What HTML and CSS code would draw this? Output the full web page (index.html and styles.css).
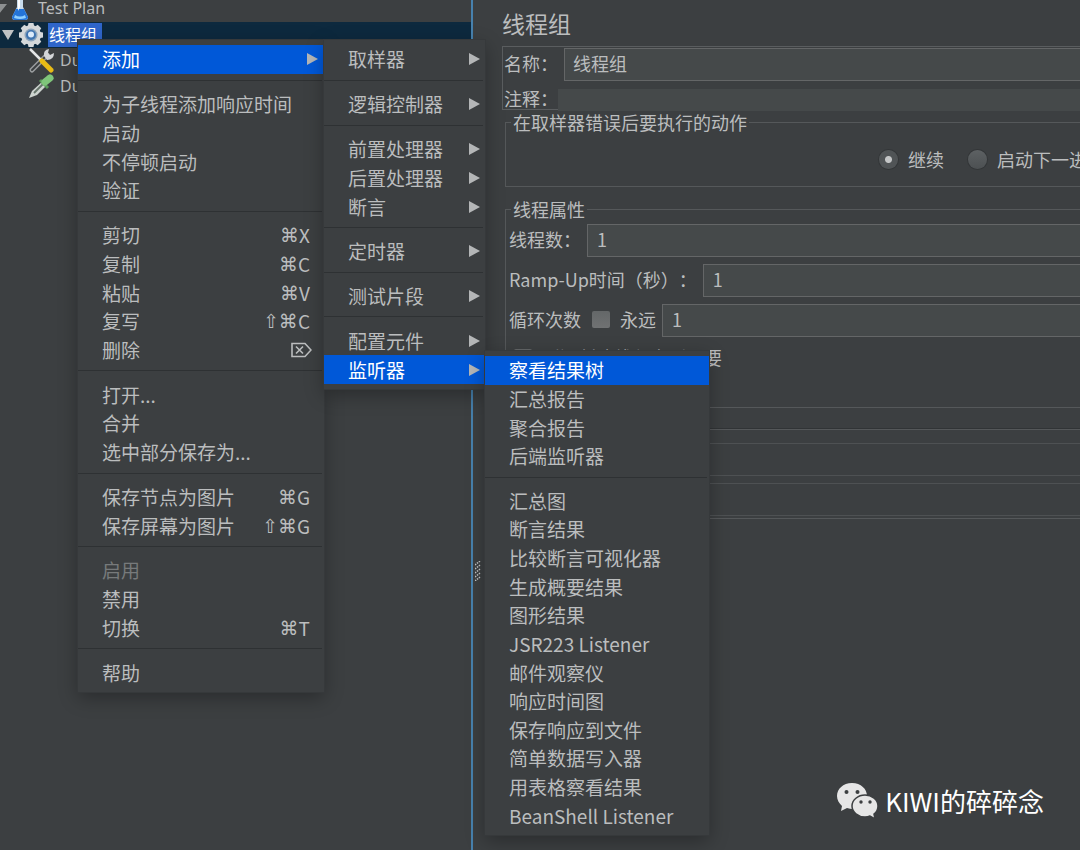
FILE: index.html
```
<!DOCTYPE html>
<html lang="zh-CN">
<head>
<meta charset="utf-8">
<title>线程组</title>
<link rel="stylesheet" href="styles.css">
</head>
<body>
<div class="app">
  <aside class="tree">
    <ul class="tree-list">
      <li class="tree-row">
        <svg class="arrow" viewBox="0 0 14 12"><path d="M-9 1H7L-1 11Z" fill="#8d9092"/></svg>
        <svg class="icon-flask" viewBox="0 0 18 24"><path d="M5 1h8l-1 2v7l5 10q0 3-3 3H4q-3 0-3-3l5-10V3Z" fill="#c9dcec"/><path d="M5 12h8l4 8q0 3-3 3H4q-3 0-3-3Z" fill="#2474d8"/><path d="M4 18q5 3 10 0l1 3q-6 2-12 0Z" fill="#8fd0ff"/><path d="M7 2h2v8l-2 4Z" fill="#fff"/></svg>
        <span class="tree-name">Test Plan</span>
      </li>
      <li class="tree-row selected">
        <svg class="arrow" viewBox="0 0 14 12"><path d="M2 1h12L8 11Z" fill="#c0c2c4"/></svg>
        <svg class="icon-gear" viewBox="0 0 26 26"><g fill="#d5d8da"><circle cx="13" cy="13" r="10"/><path id="t" d="M10.500 1h5l.8 4h-6.600zM10.500 25h5l.8-4h-6.600z"/><use href="#t" transform="rotate(45 13 13)"/><use href="#t" transform="rotate(90 13 13)"/><use href="#t" transform="rotate(135 13 13)"/></g><circle cx="13" cy="13" r="6.500" fill="#8ba3bb"/><circle cx="13" cy="13" r="5" fill="#3f74b0"/><circle cx="13" cy="12.500" r="3" fill="#dbeafa"/></svg>
        <span class="tree-name">线程组</span>
      </li>
      <li class="tree-row child">
        <svg class="icon-tool" viewBox="0 0 26 26"><path d="M4 22 19 7" stroke="#9a9d9f" stroke-width="5" stroke-linecap="round"/><path d="M4 22 17 9" stroke="#3c3f41" stroke-width="2" stroke-linecap="round"/><path d="M16 8q-1-6 5-7l-1 4 2 2 4-2q0 7-7 7Z" fill="#d4d6d8"/><path d="m2 1 13 13" stroke="#e4e6e7" stroke-width="2.500"/><path d="m14 13 9 9" stroke="#e8bb16" stroke-width="5" stroke-linecap="round"/></svg>
        <span class="tree-name">Dummy</span>
      </li>
      <li class="tree-row child">
        <svg class="icon-tool" viewBox="0 0 26 26"><path d="m1 24 3-7L15 7l4 4L9 21Z" fill="#cdd4cf"/><path d="M6 19 15 10" stroke="#66756b" stroke-width="2"/><path d="m12 6 8 8" stroke="#5a9a5a" stroke-width="3"/><path d="m17 8 5-4" stroke="#7fc57a" stroke-width="7" stroke-linecap="round"/></svg>
        <span class="tree-name">Dummy</span>
      </li>
    </ul>
  </aside>
  <div class="splitter">
    <svg class="grip" viewBox="0 0 6 20"><path d="m0 4 5-4M0 8l5-4M0 12l5-4M0 16l5-4M0 20l5-4" stroke="#c5c7c8" stroke-width="1.500" stroke-dasharray="1.500 1"/></svg>
  </div>
  <main class="editor">
    <h1 class="title">线程组</h1>
    <section class="identity">
      <div class="field"><label for="name">名称：</label><input class="box" id="name" type="text" value="线程组"></div>
      <div class="field comment"><label for="note">注释：</label><input class="flat" id="note" type="text"></div>
    </section>
    <fieldset class="group">
      <legend>在取样器错误后要执行的动作</legend>
      <div class="choices">
        <label class="choice"><input type="radio" name="onerror" checked>继续</label>
        <label class="choice"><input type="radio" name="onerror">启动下一进程循环</label>
      </div>
    </fieldset>
    <fieldset class="group threads">
      <legend>线程属性</legend>
      <div class="rows">
        <div class="field"><label for="threads">线程数：</label><input class="box" id="threads" type="text" value="1"></div>
        <div class="field"><label for="ramp">Ramp-Up时间（秒）：</label><input class="box" id="ramp" type="text" value="1"></div>
        <div class="field loops"><label for="loops">循环次数</label><label class="check"><input type="checkbox">永远</label><input class="box" id="loops" type="text" value="1"></div>
        <label class="check delayed"><input type="checkbox">延迟创建线程直到需要</label>
      </div>
    </fieldset>
    <section class="schedule">
      <input class="box" type="text" aria-label="持续时间" disabled>
      <input class="box" type="text" aria-label="启动延迟" disabled>
    </section>
  </main>

  <nav class="menu menu-main">
    <button class="item active">添加<i class="more"></i></button>
    <hr>
    <button class="item">为子线程添加响应时间</button>
    <button class="item">启动</button>
    <button class="item">不停顿启动</button>
    <button class="item">验证</button>
    <hr>
    <button class="item">剪切<kbd><span class="mod">⌘</span>X</kbd></button>
    <button class="item">复制<kbd><span class="mod">⌘</span>C</kbd></button>
    <button class="item">粘贴<kbd><span class="mod">⌘</span>V</kbd></button>
    <button class="item">复写<kbd><span class="mod">⇧⌘</span>C</kbd></button>
    <button class="item">删除<kbd aria-label="Delete"><svg class="key-delete" viewBox="0 0 21 16"><path d="M1 1.500h13l6 6.500-6 6.500H1ZM5 4.500l7 7M12 4.500l-7 7" fill="none" stroke="#bbbdbe" stroke-width="1.600"/></svg></kbd></button>
    <hr>
    <button class="item">打开...</button>
    <button class="item">合并</button>
    <button class="item">选中部分保存为...</button>
    <hr>
    <button class="item">保存节点为图片<kbd><span class="mod">⌘</span>G</kbd></button>
    <button class="item">保存屏幕为图片<kbd><span class="mod">⇧⌘</span>G</kbd></button>
    <hr>
    <button class="item" disabled>启用</button>
    <button class="item">禁用</button>
    <button class="item">切换<kbd><span class="mod">⌘</span>T</kbd></button>
    <hr>
    <button class="item">帮助</button>
  </nav>

  <nav class="menu menu-add">
    <button class="item">取样器<i class="more"></i></button>
    <hr>
    <button class="item">逻辑控制器<i class="more"></i></button>
    <hr>
    <button class="item">前置处理器<i class="more"></i></button>
    <button class="item">后置处理器<i class="more"></i></button>
    <button class="item">断言<i class="more"></i></button>
    <hr>
    <button class="item">定时器<i class="more"></i></button>
    <hr>
    <button class="item">测试片段<i class="more"></i></button>
    <hr>
    <button class="item">配置元件<i class="more"></i></button>
    <button class="item active">监听器<i class="more"></i></button>
  </nav>

  <nav class="menu menu-listener">
    <button class="item active">察看结果树</button>
    <button class="item">汇总报告</button>
    <button class="item">聚合报告</button>
    <button class="item">后端监听器</button>
    <hr>
    <button class="item">汇总图</button>
    <button class="item">断言结果</button>
    <button class="item">比较断言可视化器</button>
    <button class="item">生成概要结果</button>
    <button class="item">图形结果</button>
    <button class="item">JSR223 Listener</button>
    <button class="item">邮件观察仪</button>
    <button class="item">响应时间图</button>
    <button class="item">保存响应到文件</button>
    <button class="item">简单数据写入器</button>
    <button class="item">用表格察看结果</button>
    <button class="item">BeanShell Listener</button>
  </nav>

  <div class="watermark">
    <svg viewBox="0 0 42 36"><path d="M15 0C6 0 0 6 0 13c0 4 2 7 5 10l-1 5 6-3q3 1 6 1C24 26 30 20 30 13S24 0 15 0Z" fill="#e6e6e6"/><circle cx="9.500" cy="9" r="2" fill="#3c3f41"/><circle cx="20.500" cy="9" r="2" fill="#3c3f41"/><path d="M28 12c-7 0-13 5-13 11s6 11 13 11q3 0 5-1l5 3-1-5q4-3 4-8c0-6-6-11-13-11Z" fill="#e6e6e6" stroke="#3c3f41" stroke-width="1.500"/><circle cx="24" cy="19" r="1.700" fill="#3c3f41"/><circle cx="33" cy="19" r="1.700" fill="#3c3f41"/></svg>
    <span>KIWI的碎碎念</span>
  </div>
</div>
</body>
</html>
```
FILE: styles.css
```
* { box-sizing: border-box; }

body {
  margin: 0;
  background: #3c3f41;
  color: #bbbdbe;
  font: 18px/26px "Noto Sans CJK SC", "DejaVu Sans", sans-serif;
  text-spacing-trim: space-all;
}

button, input { font: inherit; color: inherit; }

.app {
  position: relative;
  display: flex;
  height: 100vh;
  overflow: hidden;
  white-space: nowrap;
}

/* Test plan tree */
.tree { flex: 0 0 471px; }
.tree-list {
  list-style: none;
  margin: -4px 0 0;
  padding: 0;
  font-family: "Noto Sans", "Noto Sans CJK SC", sans-serif;
  font-size: 16px;
}
.tree-row { display: flex; align-items: center; height: 26px; }
.tree-row.selected { background: #0d293e; color: #fff; }
.tree-row.child { padding-left: 28px; }
.tree-name { padding-bottom: 2px; }
.arrow { width: 14px; height: 12px; }
.icon-flask { width: 18px; height: 24px; margin-right: 9px; margin-left: -3px; }
.icon-gear { width: 26px; height: 26px; margin: 0 4px; }
.icon-tool { width: 26px; height: 26px; margin-right: 6px; }
.selected .tree-name { background: #2f65ca; padding: 0 5px 0 1px; line-height: 24px; }

.splitter {
  flex: 0 0 14px;
  display: flex;
  align-items: center;
  border-left: 2px solid #4781ad;
}
.grip { width: 6px; height: 20px; margin: 292px 0 0 2px; }

/* Editor */
.editor { flex: 1; min-width: 0; overflow: hidden; padding: 7px 0 0 17px; }
.title { margin: 0 0 7px; font-size: 23px; line-height: 32px; font-weight: 400; }
.identity {
  border: 1px solid #5a5d5f;
  border-right: 0;
  padding: 1px 0 1px 1px;
  height: 64px;
}
.field { display: flex; align-items: center; gap: 6px; }
.field label { padding-bottom: 3px; }
.comment { gap: 0; margin-top: 4px; }
.box, .flat {
  flex: 1;
  min-width: 0;
  height: 33px;
  margin: 0;
  padding: 0 8px 3px;
  border: 1px solid #646667;
  border-right: 0;
  background: #45494a;
}
.flat { border: 0; height: 22px; }
.box:disabled { background: transparent; border-color: #4e5153; }

.group {
  margin: -1px 0 0 3px;
  padding: 0;
  border: 1px solid #55585a;
  border-right: 0;
  min-width: 0;
}
.group legend { margin-left: 5px; padding: 0 2px; line-height: 26px; }
.choices { display: flex; gap: 24px; padding: 11px 0 14px 373px; }
.choice { display: flex; align-items: center; gap: 10px; }
.choice input, .check input { appearance: none; margin: 0; flex: none; }
.choice input {
  width: 19px;
  height: 19px;
  border-radius: 50%;
  background: linear-gradient(#5d6163, #4c5052);
  box-shadow: 0 0 0 1px #333638;
}
.choice input:checked { background: radial-gradient(circle, #c4c6c7 0 3px, #505456 4px); }
.group.threads { margin-top: 9px; }
.rows { display: flex; flex-direction: column; gap: 7px; padding: 2px 0 37px 3px; }
.threads .box { padding: 0 9px 3px; }
.check { display: flex; align-items: center; gap: 10px; }
.check input {
  width: 18px;
  height: 17px;
  border-radius: 2px;
  background: linear-gradient(#646768, #707273);
}
.loops .check { margin-left: 5px; }
.delayed { margin-left: 5px; }

.schedule {
  display: flex;
  flex-direction: column;
  gap: 7px;
  margin: 21px 0 0 3px;
  padding: 13px 0 2px 4px;
  border: 1px solid #55585a;
  border-right: 0;
  box-shadow: 0 -1px 0 #313436;
}
.schedule .box { flex: none; }

/* Popup menus */
.menu {
  position: absolute;
  display: flex;
  flex-direction: column;
  padding: 5px 0;
  background: #3c3f41;
  box-shadow: 0 0 0 1px #36393b, 0 6px 18px rgba(0, 0, 0, .3);
  font-size: 19px;
}
.menu-main { left: 78px; top: 40px; width: 246px; height: 652px; }
.menu-add { left: 324px; top: 40px; width: 161px; height: 349px; }
.menu-listener { left: 485px; top: 351px; width: 224px; height: 484px; }
.item {
  flex: 1;
  display: flex;
  align-items: center;
  justify-content: space-between;
  min-height: 0;
  padding: 0 14px 0 24px;
  border: 0;
  background: none;
  line-height: 28px;
  text-align: left;
}
.item.active { background: #0058d8; color: #fff; }
.item:disabled { color: #777a7b; }
.menu-add .item { padding-right: 5px; }
.menu hr {
  flex: none;
  width: calc(100% - 2px);
  height: 1px;
  margin: 6px 2px 9px 0;
  border: 0;
  background: #2e3133;
}
.more {
  border-left: 11px solid #b4b6b7;
  border-top: 6px solid transparent;
  border-bottom: 6px solid transparent;
}
.menu-main .more { margin-right: -8px; }
kbd { display: flex; align-items: center; font: inherit; }
.mod { font-family: "DejaVu Sans", sans-serif; }
.key-delete { width: 21px; height: 16px; margin-right: -2px; }

.watermark {
  position: absolute;
  right: 36px;
  bottom: 31px;
  display: flex;
  align-items: center;
  gap: 6px;
  color: #fff;
  font-size: 26px;
  line-height: 36px;
}
.watermark svg { width: 42px; height: 36px; }
```
